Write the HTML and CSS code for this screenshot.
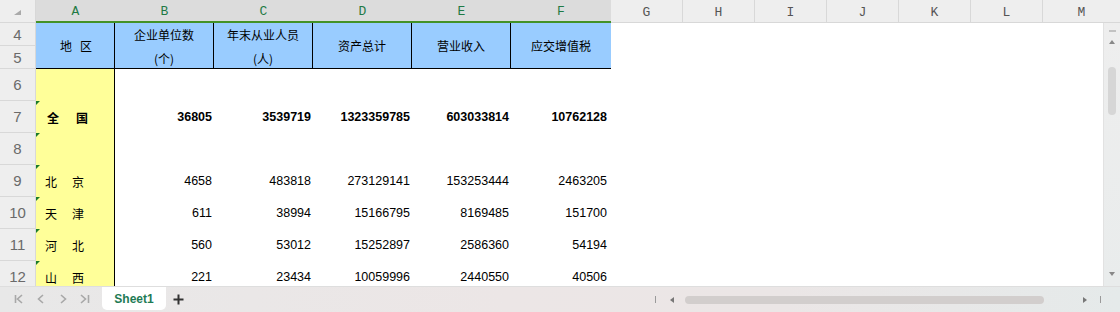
FILE: index.html
```html
<!DOCTYPE html>
<html lang="zh">
<head>
  <meta charset="UTF-8">
  <title>Sheet1</title>
  <link rel="stylesheet" href="styles.css">
</head>
<body>
  <div class="app">
    <div class="sheet">
      <div class="grid">
        <!-- column headers -->
        <div class="corner"><span class="corner-mark"></span></div>
        <div class="ch on">A</div>
        <div class="ch on">B</div>
        <div class="ch on">C</div>
        <div class="ch on">D</div>
        <div class="ch on">E</div>
        <div class="ch on">F</div>
        <div class="ch">G</div>
        <div class="ch">H</div>
        <div class="ch">I</div>
        <div class="ch">J</div>
        <div class="ch">K</div>
        <div class="ch">L</div>
        <div class="ch">M</div>

        <!-- rows 4-5: table header -->
        <div class="rh">4</div>
        <div class="hd tall area">地区</div>
        <div class="hd">企业单位数</div>
        <div class="hd">年末从业人员</div>
        <div class="hd tall">资产总计</div>
        <div class="hd tall">营业收入</div>
        <div class="hd tall last">应交增值税</div>

        <div class="rh">5</div>
        <div class="hd low">(个)</div>
        <div class="hd low">(人)</div>

        <!-- data -->
        <div class="rh">6</div>
        <div class="ca"></div>

        <div class="rh">7</div>
        <div class="ca flag bold">全　国</div>
        <div class="num bold">36805</div>
        <div class="num bold">3539719</div>
        <div class="num bold">1323359785</div>
        <div class="num bold">603033814</div>
        <div class="num nf bold">10762128</div>

        <div class="rh">8</div>
        <div class="ca flag"></div>

        <div class="rh">9</div>
        <div class="ca flag">北　京</div>
        <div class="num">4658</div>
        <div class="num">483818</div>
        <div class="num">273129141</div>
        <div class="num">153253444</div>
        <div class="num nf">2463205</div>

        <div class="rh">10</div>
        <div class="ca flag">天　津</div>
        <div class="num">611</div>
        <div class="num">38994</div>
        <div class="num">15166795</div>
        <div class="num">8169485</div>
        <div class="num nf">151700</div>

        <div class="rh">11</div>
        <div class="ca flag">河　北</div>
        <div class="num">560</div>
        <div class="num">53012</div>
        <div class="num">15252897</div>
        <div class="num">2586360</div>
        <div class="num nf">54194</div>

        <div class="rh">12</div>
        <div class="ca flag">山　西</div>
        <div class="num">221</div>
        <div class="num">23434</div>
        <div class="num">10059996</div>
        <div class="num">2440550</div>
        <div class="num nf">40506</div>
      </div>

      <!-- vertical scrollbar -->
      <div class="vscroll">
        <span class="v-split"></span>
        <span class="v-up"></span>
        <span class="v-thumb"></span>
        <span class="v-down"></span>
      </div>
    </div>

    <div class="tabs">
      <svg class="nav" width="100" height="25" viewBox="0 0 100 25">
        <g fill="none" stroke="#a8a8a8" stroke-width="1.6">
          <path d="M15.5 8v8M22 8l-4.5 4l4.5 4"/>
          <path d="M43 8l-4.5 4l4.5 4"/>
          <path d="M61 8l4.5 4l-4.5 4"/>
          <path d="M81 8l4.5 4l-4.5 4M88.5 8v8"/>
        </g>
      </svg>
      <div class="tab">Sheet1</div>
      <svg class="add" width="11" height="11" viewBox="0 0 11 11">
        <path d="M5.5 0.5v10M0.5 5.5h10" stroke="#333" stroke-width="2"/>
      </svg>
      <div class="hscroll">
        <span class="stop"></span>
        <span class="arr-l"></span>
        <span class="thumb"></span>
        <span class="arr-r"></span>
        <span class="stop end"></span>
      </div>
    </div>
  </div>
</body>
</html>
```

FILE: styles.css
```css
*, *::before, *::after { box-sizing: border-box; }
body {
  margin: 0; background: #fff; color: #000;
  font-family: "Liberation Sans", Arial, "Noto Sans CJK SC", sans-serif;
}
.app {
  width: 1120px; height: 312px; overflow: hidden;
  display: flex; flex-direction: column;
}
.sheet { position: relative; height: 286px; flex: none; overflow: hidden; }
.grid {
  display: grid;
  grid-template-columns: 36px 79px 99px 99px 99px 99px 100px repeat(6, 72px) 78px;
  grid-template-rows: 23px 23px 23px repeat(7, 32px);
}

/* headers */
.corner {
  background: #eee; border-right: 1px solid #d8d8d8; border-bottom: 1px solid #d8d8d8;
  display: flex; align-items: center; justify-content: center; padding-top: 2px;
}
.corner-mark {
  width: 0; height: 0;
  border-left: 7px solid transparent; border-bottom: 5px solid #a9a9a9;
}
.ch {
  display: flex; align-items: center; justify-content: center; padding-top: 2px;
  font-family: "Liberation Mono", "DejaVu Sans Mono", monospace; font-size: 13px;
  color: #555; background: #eee;
  border-right: 1px solid #d8d8d8; border-bottom: 1px solid #d8d8d8;
}
.ch.on {
  background: #dcdcdc; color: #1f7a45;
  border-right: none; border-bottom: 2px solid #449227;
}
.rh {
  grid-column: 1;
  display: flex; align-items: center; justify-content: center;
  background: #eee; color: #6a6a6a; font-size: 15px;
  border-right: 1px solid #d8d8d8; border-bottom: 1px solid #d8d8d8;
}

/* blue table header */
.hd {
  display: flex; align-items: center; justify-content: center;
  background: #99ccff; border-right: 1px solid #000;
  font-family: "Noto Sans CJK SC", sans-serif; font-size: 12px;
}
.hd.tall { grid-row: span 2; border-bottom: 1px solid #000; }
.hd.low { border-bottom: 1px solid #000; padding-top: 2px; }
.hd.last { border-right: none; }
.hd.area { letter-spacing: 8px; padding-left: 10px; }

/* column A */
.ca {
  position: relative;
  display: flex; align-items: center; padding-left: 9px;
  background: #ffff99; border-right: 1px solid #000;
  font-family: "Noto Sans CJK SC", sans-serif; font-size: 12px; letter-spacing: 1.5px;
}
.ca.bold { padding-left: 11px; letter-spacing: 2.5px; }
.flag::before {
  content: ""; position: absolute; left: 0; top: 0;
  border-top: 4px solid #1a7a2a; border-right: 4px solid transparent;
}

/* numbers */
.num {
  display: flex; align-items: center; justify-content: flex-end;
  padding-right: 2px; font-size: 12.5px;
}
.num.nf { padding-right: 4px; }
.bold { font-weight: bold; }

/* vertical scrollbar */
.vscroll {
  position: absolute; top: 23px; right: 0; bottom: 0; width: 17px;
  background: linear-gradient(#eeeeee, #e9ecec);
  border-left: 1px solid #e2e2e2;
  display: flex; flex-direction: column; align-items: center; padding-top: 7px;
}
.v-split { width: 7px; height: 2px; background: #c2c2c2; }
.v-up {
  margin-top: 8px; width: 0; height: 0;
  border-left: 3px solid transparent; border-right: 3px solid transparent;
  border-bottom: 4px solid #888;
}
.v-thumb {
  margin-top: 23px; width: 8px; height: 48px;
  border-radius: 4px; background: #d6d6d6;
}
.v-down {
  margin-top: auto; margin-bottom: 10px; width: 0; height: 0;
  border-left: 3px solid transparent; border-right: 3px solid transparent;
  border-top: 4px solid #888;
}

/* sheet tabs bar */
.tabs {
  height: 26px; flex: none;
  display: flex; align-items: flex-start;
  border-top: 1px solid #dedede;
  background: linear-gradient(90deg, #e8e8e8 0%, #ece6e6 45%, #ebe6e6 70%, #e5eaea 100%);
}
.nav { display: block; }
.tab {
  margin-left: 2px; width: 64px; height: 23px;
  display: flex; align-items: center; justify-content: center;
  background: #fff; border-radius: 0 0 5px 5px;
  color: #1e7b55; font-size: 12px; font-weight: bold;
}
.add { margin-left: 7px; align-self: center; display: block; }
.hscroll {
  margin-left: auto; margin-right: 19px; align-self: center;
  display: flex; align-items: center;
}
.stop { width: 1px; height: 7px; background: #9a9a9a; }
.stop.end { margin-left: 13px; }
.arr-l {
  margin-left: 14px; width: 0; height: 0;
  border-top: 3px solid transparent; border-bottom: 3px solid transparent;
  border-right: 4px solid #777;
}
.thumb {
  margin-left: 11px; width: 359px; height: 8px;
  border-radius: 4px; background: #d2cecd;
}
.arr-r {
  margin-left: 39px; width: 0; height: 0;
  border-top: 3px solid transparent; border-bottom: 3px solid transparent;
  border-left: 4px solid #777;
}
```
